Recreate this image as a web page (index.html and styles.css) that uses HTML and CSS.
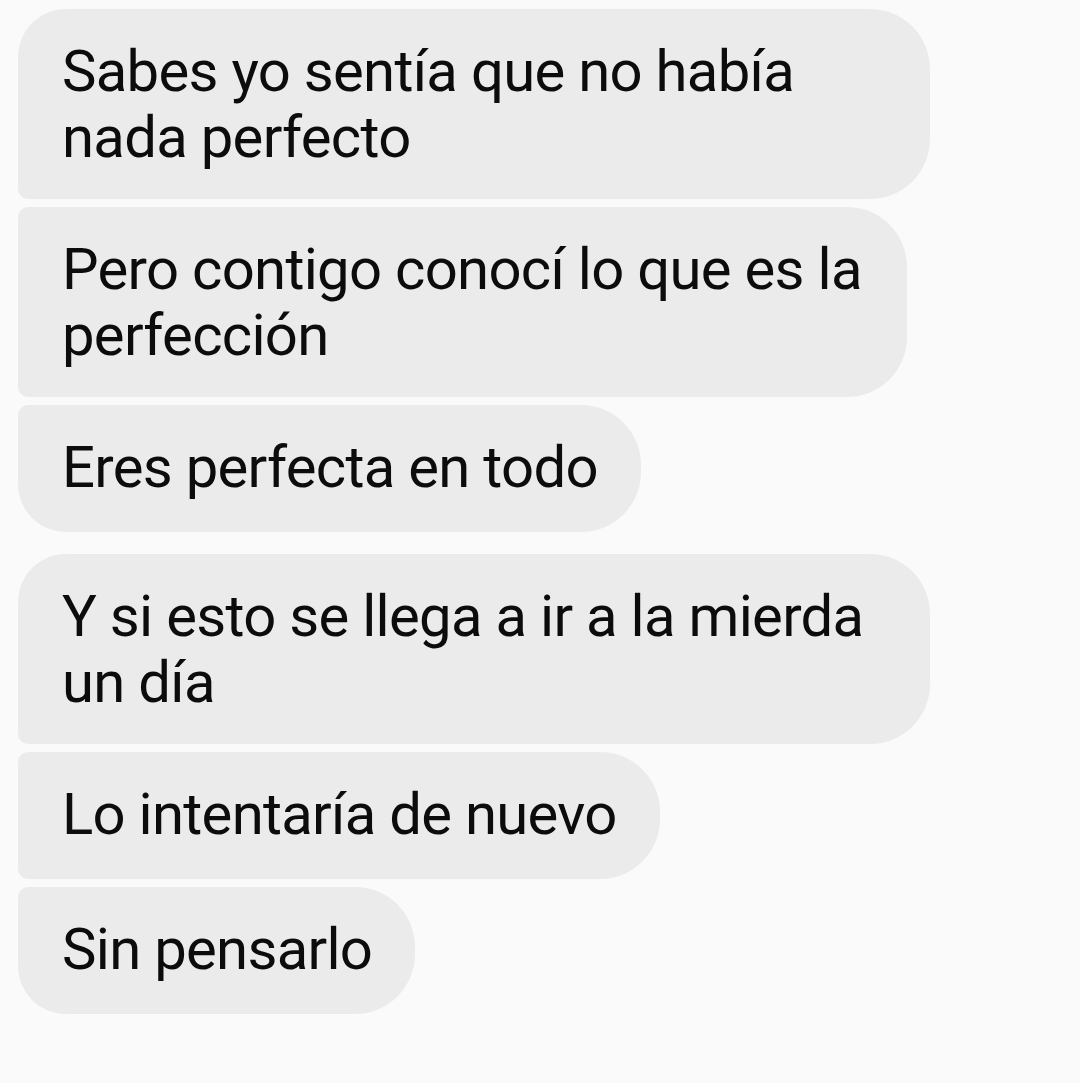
FILE: index.html
```html
<!DOCTYPE html>
<html lang="es">
<head>
<meta charset="utf-8">
<link rel="stylesheet" href="styles.css">
</head>
<body>
<div class="thread">
  <div class="group">
    <div class="bubble first wide">Sabes yo sentía que no había nada perfecto</div>
    <div class="bubble middle w2">Pero contigo conocí lo que es la perfección</div>
    <div class="bubble last">Eres perfecta en todo</div>
  </div>
  <div class="group">
    <div class="bubble first wide">Y si esto se llega a ir a la mierda un día</div>
    <div class="bubble middle">Lo intentaría de nuevo</div>
    <div class="bubble last">Sin pensarlo</div>
  </div>
</div>
</body>
</html>
```
FILE: styles.css
```css
html, body {
  margin: 0;
  padding: 0;
  background: #fafafa;
}
.thread {
  display: flex;
  flex-direction: column;
  gap: 22px;
  padding: 9px 0 0 18px;
  font-family: Roboto, "Noto Sans", sans-serif;
}
.group {
  display: flex;
  flex-direction: column;
  align-items: flex-start;
  gap: 8px;
}
.bubble {
  box-sizing: border-box;
  min-height: 127px;
  max-width: 912px;
  background: #ebebeb;
  color: #0c0c0c;
  font-size: 58px;
  line-height: 66px;
  letter-spacing: -0.7px;
  padding: 29px 43px 29px 44px;
  border-radius: 60px;
}
.bubble.wide { width: 912px; padding-right: 20px; }
.bubble.w2 { width: 889px; padding-right: 20px; }
.bubble.first { border-bottom-left-radius: 10px; border-top-left-radius: 48px; }
.bubble.middle { border-top-left-radius: 10px; border-bottom-left-radius: 10px; }
.bubble.last { border-top-left-radius: 10px; border-bottom-left-radius: 48px; }
```
